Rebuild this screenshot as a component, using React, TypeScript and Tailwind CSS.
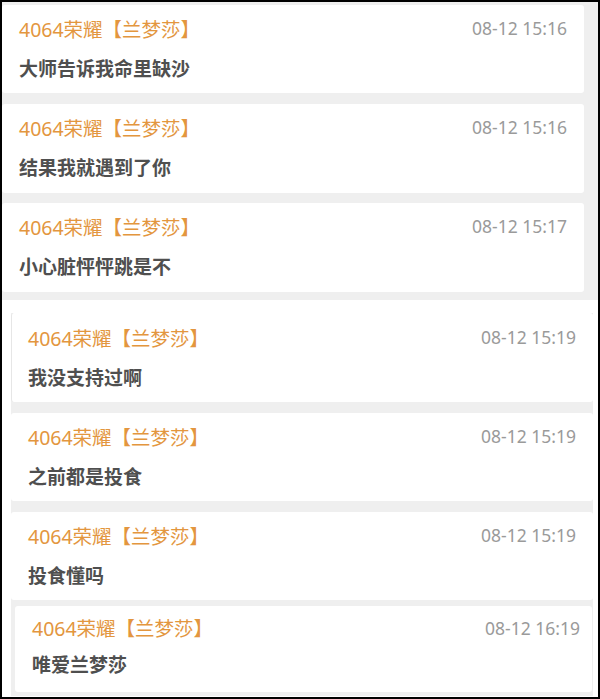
import React from "react";

type Msg = { text: string; time: string };

const top: Msg[] = [
  { text: "大师告诉我命里缺沙", time: "08-12 15:16" },
  { text: "结果我就遇到了你", time: "08-12 15:16" },
  { text: "小心脏怦怦跳是不", time: "08-12 15:17" },
];

const NAME = "4064荣耀【兰梦莎】";
const FONT = { fontFamily: '"Noto Sans", "Noto Sans CJK SC", sans-serif' };

function Card({ m, h, extra = "" }: { m: Msg; h: string; extra?: string }) {
  return (
    <div className={`bg-white rounded-[3px] pr-[17px] pt-[13px] ${h} ${extra}`}>
      <div className="flex items-start justify-between">
        <div className="text-[19.5px] leading-[24px] text-[#e3963e]">{NAME}</div>
        <div className="text-[17.5px] leading-[20px] text-[#9a9a9a]">{m.time}</div>
      </div>
      <div className="mt-[15px] text-[19px] leading-[24px] font-semibold text-[#4f4f4f]">{m.text}</div>
    </div>
  );
}

export default function App() {
  return (
    <div className="w-[600px] h-[699px] bg-black p-[2px]" style={FONT}>
      <div className="w-[596px] h-[695px] flex flex-col overflow-hidden">
        <div className="h-[298px] bg-[#efefef] pt-[3px] pr-[14px] flex flex-col gap-[10px]">
          <Card m={top[0]} h="h-[88px] pl-[17px]" />
          <Card m={top[1]} h="h-[89px] pl-[17px] mt-[1px]" />
          <Card m={top[2]} h="h-[89px] pl-[17px]" />
        </div>
        <div className="flex-1 bg-white pt-[13px] pl-[9px] pr-[5px]">
          <div className="bg-[#efefef] flex flex-col pb-[4px]">
            <Card m={{ text: "我没支持过啊", time: "08-12 15:19" }} h="h-[89px] border-l border-[#e6e6e6] pl-[16px] pt-[14px]" />
            <div className="h-[11px]" />
            <Card m={{ text: "之前都是投食", time: "08-12 15:19" }} h="h-[88px] pl-[17px]" />
            <div className="h-[11px]" />
            <Card m={{ text: "投食懂吗", time: "08-12 15:19" }} h="h-[88px] pl-[17px]" />
            <div className="h-[6px]" />
            <div className="pl-[4px] pr-[1px]">
              <div className="bg-white rounded-[3px] h-[86px] pl-[17px] pr-[12px] pt-[11px]">
                <div className="flex items-start justify-between">
                  <div className="text-[19.5px] leading-[24px] text-[#e3963e]">{NAME}</div>
                  <div className="text-[17.5px] leading-[20px] text-[#9a9a9a] mt-[1px]">08-12 16:19</div>
                </div>
                <div className="mt-[12px] text-[19px] leading-[24px] font-semibold text-[#4f4f4f]">唯爱兰梦莎</div>
              </div>
            </div>
          </div>
        </div>
      </div>
    </div>
  );
}
